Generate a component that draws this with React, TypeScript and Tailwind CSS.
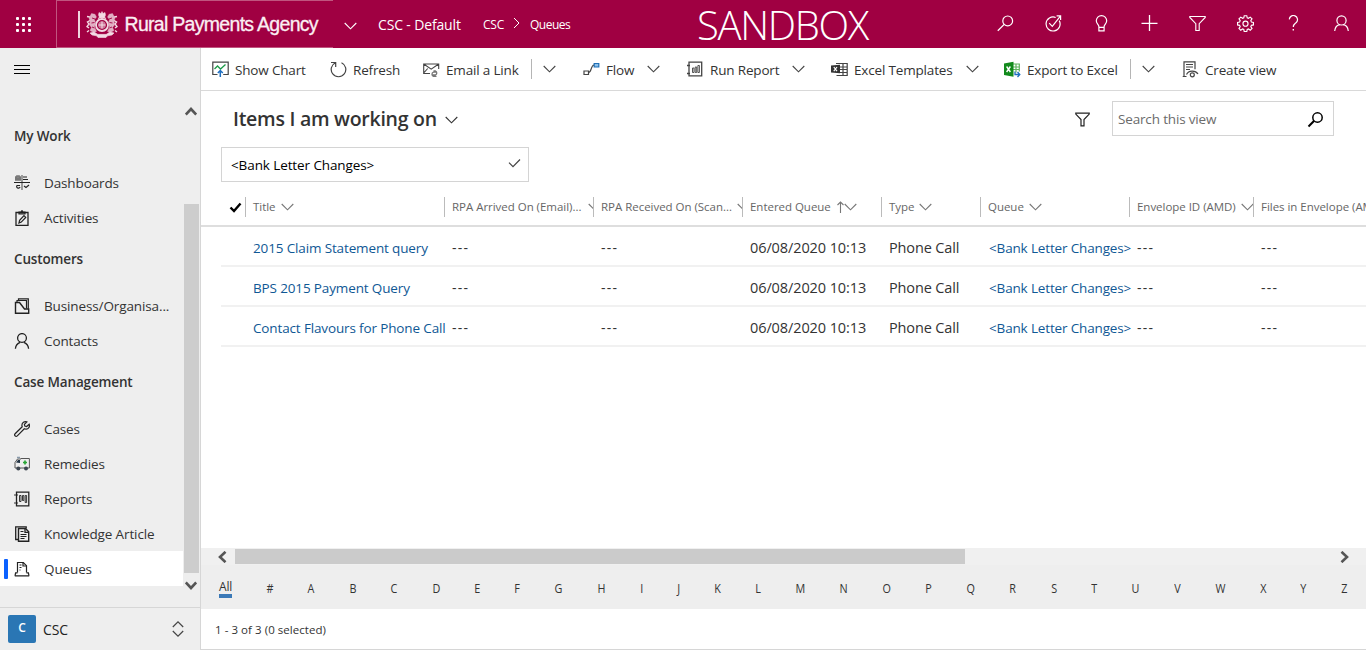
import type { ReactNode } from "react";

type IconProps = { className?: string; children: ReactNode; box?: string; w?: number; h?: number };

function Svg({ className = "", children, box, w = 16, h = 16 }: IconProps) {
  return (
    <svg
      width={w}
      height={h}
      viewBox={box ?? `0 0 ${w} ${h}`}
      fill="none"
      stroke="currentColor"
      strokeWidth="1"
      className={`shrink-0 ${className}`}
    >
      {children}
    </svg>
  );
}

function ChevronDown({ className = "" }: { className?: string }) {
  return (
    <Svg w={13} h={8} className={className}>
      <path d="M.7 1l5.8 5.8L12.3 1" strokeWidth="1.1" />
    </Svg>
  );
}

function Crest() {
  return (
    <Svg w={32} h={27} className="text-[#f3dbe4]">
      <path d="M12.500 4l.5-2.500 2 1L16 .5l1 2 2-1 .5 2.500-1 2.500h-5z" fill="currentColor" strokeWidth=".5" />
      <circle cx="16" cy="14" r="6" strokeWidth="1.800" />
      <circle cx="16" cy="14" r="3.800" fill="currentColor" stroke="none" opacity=".55" />
      <path d="M12 7.500Q16 5 20 7.500M12.500 14h7M16 10.500v7" strokeWidth="1.100" />
      <path d="M5.500 2.500l3.500.8 1.500 2.700-2 2.500 1 3-1 4.500 2 4.500-3 1-3.500-2 1.500-3-2-2.500.5-4-1-3z" fill="currentColor" opacity=".8" strokeWidth=".4" />
      <path d="M26.500 2.500L23 3.300 21.500 6l2 2.500-1 3 1 4.500-2 4.500 3 1 3.500-2-1.500-3 2-2.500-.5-4 1-3z" fill="currentColor" opacity=".8" strokeWidth=".4" />
      <path d="M3.800 6L1 5.500M4 9.500L1.500 11l1.500 2-2 2.500 2 1.500M3 19.500L1 21M28.200 6l2.800-.5M28 9.500l2.500 1.500-1.500 2 2 2.500-2 1.500M29 19.500l2 1.500" strokeWidth="1.400" />
      <path d="M6 7l3 1M5.500 12l3-.5M6 16l2.500 1M26 7l-3 1M26.500 12l-3-.5M26 16l-2.500 1" stroke="#a00042" strokeWidth=".9" />
      <path d="M4 22l4-1 3.500 2.200h9L24 21l4 1-2 2-4.500.8-1.500 1.700h-8L10.500 24.800 6 24z" fill="currentColor" strokeWidth=".6" />
      <path d="M12 22.300h8" stroke="#a00042" strokeWidth=".8" />
    </Svg>
  );
}

const topIcons: { name: string; icon: ReactNode }[] = [
  {
    name: "search",
    icon: (
      <Svg w={17} h={17}>
        <circle cx="10.700" cy="5.900" r="4.900" strokeWidth="1.200" />
        <path d="M7.200 9.400L.8 15.800" strokeWidth="1.300" />
      </Svg>
    ),
  },
  {
    name: "assistant",
    icon: (
      <Svg w={17} h={17}>
        <path d="M14.200 5.600A7 7 0 1 1 10.700 2.500M11.600.9h4v4M15.400 1.100L7.300 11.300 4.200 8.100" strokeWidth="1.200" />
      </Svg>
    ),
  },
  {
    name: "ideas",
    icon: (
      <Svg w={17} h={17}>
        <path d="M5.900 11.800c0-2.600-2.600-3-2.600-6A5.200 5.200 0 0 1 13.700 5.800c0 3-2.600 3.400-2.600 6v4H5.900zM5.900 12.300h5.200" strokeWidth="1.200" />
      </Svg>
    ),
  },
  {
    name: "add",
    icon: (
      <Svg w={17} h={17}>
        <path d="M8.500 0v16M.5 8.300h16" strokeWidth="1.300" />
      </Svg>
    ),
  },
  {
    name: "filter",
    icon: (
      <Svg w={17} h={17}>
        <path d="M.8 1.500h15.400v1L10.200 8.700v6.800H6.800V8.700L.8 2.500z" strokeWidth="1.100" />
      </Svg>
    ),
  },
  {
    name: "settings",
    icon: (
      <Svg w={17} h={17} box="0 0 24 24">
        <path
          d="M10.200 1.800h3.600l.6 2.900 1.800.8 2.500-1.700 2.500 2.500-1.700 2.500.8 1.800 2.900.6v3.600l-2.900.6-.8 1.800 1.700 2.500-2.500 2.500-2.500-1.700-1.800.8-.6 2.900h-3.600l-.6-2.900-1.800-.8-2.500 1.700-2.500-2.500 1.700-2.500-.8-1.800-2.900-.6v-3.600l2.900-.6.8-1.800-1.700-2.500 2.500-2.500 2.500 1.700 1.800-.8z"
          strokeWidth="1.600"
          transform="translate(0 -.8)"
        />
        <circle cx="12" cy="12.200" r="3.600" strokeWidth="1.600" />
      </Svg>
    ),
  },
  {
    name: "help",
    icon: (
      <Svg w={17} h={17}>
        <path d="M4.300 4.400a4.100 4.100 0 1 1 7 3.100C9.600 8.900 8.300 9.500 8.300 12" strokeWidth="1.200" />
        <path d="M8.300 14v1.600" strokeWidth="1.400" />
      </Svg>
    ),
  },
  {
    name: "account",
    icon: (
      <Svg w={17} h={17}>
        <circle cx="8.500" cy="5.400" r="4.600" strokeWidth="1.200" />
        <path d="M1.700 16c.4-3.600 2.500-5.900 5.200-6.300M15.300 16c-.4-3.600-2.500-5.900-5.200-6.300" strokeWidth="1.200" />
      </Svg>
    ),
  },
];

function TopBar() {
  return (
    <header className="flex h-12 shrink-0 items-center bg-[#a00042] text-white">
      <div className="flex h-full w-14 items-center pl-4">
        <div className="grid grid-cols-3 gap-[3px]">
          {Array.from({ length: 9 }, (_, i) => (
            <span key={i} className="size-[3px] rounded-[1px] bg-white" />
          ))}
        </div>
      </div>
      <div className="flex h-12 w-[277px] items-center border-y border-l border-[#c0557f] pl-[21px]">
        <span className="h-[27px] w-[1.500px] bg-[#f0d4de]" />
        <div className="ml-[6px] w-[33px]">
          <Crest />
        </div>
        <span className="ml-[6px] whitespace-nowrap pt-0.5 font-['Liberation_Sans'] text-[19.500px] tracking-[-0.700px] text-[#fbeff3] [-webkit-text-stroke:0.300px_#fbeff3]">
          Rural Payments Agency
        </span>
      </div>
      <ChevronDown className="ml-[11px] mt-1 w-[13px]" />
      <span className="ml-[21px] w-[105px] whitespace-nowrap pt-px text-[14px] tracking-[-0.15px]">CSC - Default</span>
      <span className="w-[30px] pt-px text-[12px] tracking-[-0.25px]">CSC</span>
      <Svg w={7} h={12} className="mb-0.5">
        <path d="M1 1l5 5-5 5" />
      </Svg>
      <span className="ml-[10px] w-[167px] pt-px text-[12px] tracking-[-0.5px]">Queues</span>
      <span className="w-[296px] whitespace-nowrap pt-px text-[40px] font-light leading-[55px] tracking-[-1.300px]">SANDBOX</span>
      <div className="flex flex-1 items-center gap-[31px] pl-[4px]">
        {topIcons.map((t) => (
          <span key={t.name} className="pb-0.5">
            {t.icon}
          </span>
        ))}
      </div>
    </header>
  );
}

const navIcon: Record<string, ReactNode> = {
  Dashboards: (
    <Svg>
      <path d="M1 2h2v-1h2v1h2M1 3.500h6M1 5h6" stroke="#777" strokeWidth="1.700" />
      <path d="M8 0v15" stroke="#777" strokeWidth="1.400" />
      <path d="M0 7.500h16M9 2h4M9 4.500h5" strokeWidth="1" />
      <path d="M6 10.500H3a1.700 1.700 0 1 0 3 1.500M10 11l2 1.500 3-2.500" strokeWidth="1.200" />
    </Svg>
  ),
  Activities: (
    <Svg>
      <path d="M2 2.500h12v13H2z" strokeWidth="1.300" />
      <path d="M5 3.800V2h2L8 .6 9 2h2v1.800z" strokeWidth="1.200" />
      <path d="M5 13l.6-2.600 4.400-4.700 1.700 1.700-4.400 4.700z" strokeWidth="1.200" />
    </Svg>
  ),
  "Business/Organisa...": (
    <Svg>
      <path d="M1.500 15.300V4.500h4l5 6.500h4.200v4.300z" strokeWidth="1.400" />
      <path d="M3 4V2.500h9.500v8M4.500 2.500V.8h9.800v10" strokeWidth="1.200" />
    </Svg>
  ),
  Contacts: (
    <Svg>
      <circle cx="8" cy="5" r="4.400" strokeWidth="1.300" />
      <path d="M1.400 15.700c.3-3.200 2.200-5.500 4.800-6.400M14.600 15.700c-.3-3.200-2.200-5.500-4.800-6.400" strokeWidth="1.300" />
    </Svg>
  ),
  Cases: (
    <Svg>
      <path
        d="M15.200 3.300l-2.600 2.200-1.800-.4-.4-1.700L12.800.9C10.500.1 7.800 1.600 7.900 4.300c0 .6.1 1 .3 1.500L1.100 12.700c-1.300 1.500.6 3.500 2.200 2.200l7-7.100c2.700 1.200 6-.9 4.900-4.500z"
        strokeWidth="1.200"
      />
    </Svg>
  ),
  Remedies: (
    <Svg>
      <path d="M1 12V6.500L3.500 3H7v-.5h8.400v9.500z" stroke="#555" strokeWidth="1" />
      <path d="M2 6.500l2-2.500h2v3z" fill="#234" stroke="none" />
      <path d="M3 1.500h3" stroke="#89a" strokeWidth="1.500" />
      <path d="M11 4.500v4M9 6.500h4" stroke="#2aa636" strokeWidth="1.700" />
      <circle cx="4.300" cy="12.500" r="2" fill="#3d4650" stroke="none" />
      <circle cx="12" cy="12.500" r="2" fill="#3d4650" stroke="none" />
    </Svg>
  ),
  Reports: (
    <Svg>
      <path d="M2.500 1.200h12.300v13.600H2.500z" strokeWidth="1.300" />
      <path d="M0 4h4M0 12h4M5.500 4.500h1.500v6H5.500zM8.500 4.500h1.300v5H8.500zM11.200 4.500h1.400v7h-1.400z" strokeWidth=".9" />
    </Svg>
  ),
  "Knowledge Article": (
    <Svg>
      <path d="M4.500 15.300V2.500h7l3.200 3.200v9.600z" strokeWidth="1.400" />
      <path d="M11 2.500v3.800h3.500M4 13.500H1.700V.8h10.500v1.700" strokeWidth="1.300" />
      <path d="M6.500 5.500h3M6.500 8.500h6M6.500 10.500h6M6.500 12.500h4" strokeWidth="1" />
    </Svg>
  ),
  Queues: (
    <Svg>
      <path d="M3.500 11.500v-10h5.800l3.200 3.200v6.800" strokeWidth="1.200" />
      <path d="M9 1.500v3.500h3.500M1 14.800l.6-3h1.900M12.500 11.800h1.900l.6 3M.8 14.800h14.400M5.500 4h2M5.500 6.500h2M5.500 9h1" strokeWidth="1.200" />
    </Svg>
  ),
};

const groups = [
  { title: "My Work", items: ["Dashboards", "Activities"] },
  { title: "Customers", items: ["Business/Organisa...", "Contacts"] },
  { title: "Case Management", items: ["Cases", "Remedies", "Reports", "Knowledge Article", "Queues"] },
];

function Sidebar() {
  return (
    <aside className="flex w-[201px] shrink-0 flex-col border-r border-[#d6d6d6] bg-[#eeeeee]">
      <div className="flex h-[559px]">
        <div className="flex w-[183px] flex-col">
          <div className="flex h-16 flex-col gap-[3px] pl-[14px] pt-[17px]">
            <span className="h-px w-4 bg-black" />
            <span className="h-px w-4 bg-black" />
            <span className="h-px w-4 bg-black" />
          </div>
          {groups.map((g) => (
            <section key={g.title}>
              <h2 className="h-[53px] pl-[14px] text-[13.500px] font-semibold leading-[48px] tracking-[-0.15px] text-[#333]">
                {g.title}
              </h2>
              <ul>
                {g.items.map((it) => (
                  <li
                    key={it}
                    className={
                      it === "Queues"
                        ? "flex h-[35px] items-center bg-white"
                        : "flex h-[35px] items-center"
                    }
                  >
                    <span
                      className={
                        it === "Queues"
                          ? "ml-1 mr-0.5 h-5 w-1 rounded-[1px] bg-[#0b61ff]"
                          : "ml-1 mr-0.5 h-5 w-1"
                      }
                    />
                    <span className="ml-1 w-[30px] text-[#222]">{navIcon[it]}</span>
                    <span className="whitespace-nowrap pt-px text-[13.500px] tracking-[-0.12px] text-[#333]">{it}</span>
                  </li>
                ))}
              </ul>
            </section>
          ))}
        </div>
        <div className="flex w-[17px] flex-col items-center pt-[58px] text-[#555]">
          <Svg w={12} h={10} className="mr-px">
            <path d="M.8 8.500L6 3l5.200 5.500" strokeWidth="2.600" />
          </Svg>
          <div className="mt-[88px] h-[369px] w-[15px] bg-[#cdcdcd]" />
          <Svg w={12} h={10} className="mr-px mt-[7px]">
            <path d="M.8 2.500L6 8l5.200-5.500" strokeWidth="2.600" />
          </Svg>
        </div>
      </div>
      <div className="flex flex-1 items-center border-t border-[#d6d6d6] pl-2 pr-[16px]">
        <span className="flex size-7 items-center justify-center rounded-[2px] bg-[#2a76b4] pb-0.5 text-[12px] font-semibold text-white">
          C
        </span>
        <span className="ml-[7px] flex-1 pt-px text-[14px] font-medium tracking-[-0.1px] text-[#222]">CSC</span>
        <Svg w={12} h={18} className="text-[#444]">
          <path d="M.8 7L6 1.800 11.200 7M.8 11L6 16.200 11.200 11" strokeWidth="1.200" />
        </Svg>
      </div>
    </aside>
  );
}

function Command({ width, icon, label, menu, split }: { width: string; icon: ReactNode; label: string; menu?: boolean; split?: boolean }) {
  return (
    <div className={`flex h-full shrink-0 items-center text-[#444] ${width}`}>
      <span className="flex w-[23px] shrink-0 items-center">{icon}</span>
      <span className="whitespace-nowrap pt-[2px] text-[13.500px] tracking-[-0.17px] text-[#333]">{label}</span>
      {split && <span className="ml-3 h-5 w-px bg-[#b5b5b5]" />}
      {menu && <ChevronDown className={split ? "ml-[11px] w-[13px]" : "ml-[13px]"} />}
    </div>
  );
}

function CommandBar() {
  return (
    <nav className="flex h-[43px] shrink-0 items-center border-b border-[#d9d9d9] pl-[11px]">
      <Command
        width="w-[118px]"
        label="Show Chart"
        icon={
          <Svg w={17} h={17} className="mt-px">
            <path d="M5.500 13.500H.8V1.200h15.400v12.300h-5" strokeWidth="1.200" />
            <path d="M2.500 8l3-3 3 3L13.500 3.500" stroke="#1d9b49" strokeWidth="1.300" />
            <path d="M8.300 16V9.500M5.800 12l2.500-2.500 2.500 2.500" stroke="#1f6fc0" strokeWidth="1.500" />
          </Svg>
        }
      />
      <Command
        width="w-[93px]"
        label="Refresh"
        icon={
          <Svg w={17} h={17}>
            <path d="M5.500 1.800A7.300 7.300 0 1 0 11.500 1.800M1 1.500h4.700v4.600" strokeWidth="1.200" />
          </Svg>
        }
      />
      <Command
        width="w-[160px]"
        label="Email a Link"
        menu
        split
        icon={
          <Svg w={17} h={17}>
            <path d="M7 12.500H.7V3h15v5M.7 3l7.500 5.200L15.700 3M.7 12l4-4.500" strokeWidth="1.100" />
            <path d="M10.500 10h2a2.200 2.200 0 0 1 0 4h-3M13.500 11.200h-3a2.200 2.200 0 0 0 0 4.200h3" stroke="#777" strokeWidth="1.300" />
          </Svg>
        }
      />
      <Command
        width="w-[104px]"
        label="Flow"
        menu
        icon={
          <Svg w={17} h={17}>
            <path d="M1 10h4.500v3.500H1z" strokeWidth="1.200" />
            <path d="M5.500 11.500C9 11 7.500 4.500 11 4" strokeWidth="1.100" />
            <path d="M11.200 2.500h4.600v3.500h-4.600z" fill="#8cc0ea" stroke="#1f6fb5" strokeWidth="1.200" />
          </Svg>
        }
      />
      <Command
        width="w-[144px]"
        label="Run Report"
        menu
        icon={
          <Svg w={17} h={17}>
            <path d="M2 1.200h12.700v13.600H2zM0 4.500h3M0 12.500h3" strokeWidth="1.300" />
            <path d="M5.500 7h1.500v4.500H5.500zM8.200 6h1.500v5.500H8.200zM10.900 4.500h1.500v7h-1.500z" strokeWidth=".9" />
          </Svg>
        }
      />
      <Command
        width="w-[173px]"
        label="Excel Templates"
        menu
        icon={
          <Svg w={17} h={17}>
            <path d="M8 2.500h8.200v12H5.500M9 6h7M9 8.500h7M9 11.500h7M12 2.500v12M5 2.500h3" strokeWidth="1.200" />
            <path d="M0 4.500l9-.8v8.600l-9-.8z" fill="#333" stroke="none" />
            <path d="M2.800 6l3.200 4.200M6 6l-3.200 4.200" stroke="#fff" strokeWidth="1.200" />
          </Svg>
        }
      />
      <Command
        width="w-[178px]"
        label="Export to Excel"
        menu
        split
        icon={
          <Svg w={17} h={17}>
            <path d="M9 3h6.300v7.500M9 6h6M9 8.500h6M12 3v8.500" stroke="#5fb35f" strokeWidth="1.200" />
            <path d="M0 2.500L9.500.8v15L0 14z" fill="#128a1c" stroke="none" />
            <path d="M2.600 5.500l3.800 5.500M6.400 5.500L2.600 11" stroke="#fff" strokeWidth="1.400" />
            <path d="M11 10.500v3h4.500M13.500 11l2.300 2.500-2.300 2.500" stroke="#1f6fc0" strokeWidth="1.300" />
          </Svg>
        }
      />
      <Command
        width="w-[110px]"
        label="Create view"
        icon={
          <Svg w={17} h={17}>
            <path d="M4.500 15.500H.7M2 15.500V.8h11v7.500M4 3.500h7M4 6h7M4 8.500h4" strokeWidth="1.200" />
            <path d="M4.500 13.500c2-4.500 9-4.500 11.500-.5" strokeWidth="1.200" />
            <circle cx="10.300" cy="13.800" r="2" strokeWidth="1.200" />
          </Svg>
        }
      />
    </nav>
  );
}

type Column = { label: string; width: string; gap: string; sorted?: boolean; key: string };

const columns: Column[] = [
  { key: "title", label: "Title", width: "w-[199px]", gap: "gap-[5px]" },
  { key: "arrived", label: "RPA Arrived On (Email)...", width: "w-[149px]", gap: "gap-[7px]" },
  { key: "received", label: "RPA Received On (Scan...", width: "w-[149px]", gap: "gap-[5px]" },
  { key: "entered", label: "Entered Queue", width: "w-[139px]", gap: "gap-[6px]", sorted: true },
  { key: "type", label: "Type", width: "w-[99px]", gap: "gap-[5px]" },
  { key: "queue", label: "Queue", width: "w-[149px]", gap: "gap-[5px]" },
  { key: "envelope", label: "Envelope ID (AMD)", width: "w-[124px]", gap: "gap-[5px]" },
  { key: "files", label: "Files in Envelope (AMD)", width: "w-[113px]", gap: "gap-[5px]" },
];

const titles = ["2015 Claim Statement query", "BPS 2015 Payment Query", "Contact Flavours for Phone Call"];

function Dashes({ width }: { width: string }) {
  return <span className={`shrink-0 pl-2 text-[14px] tracking-[1.300px] text-[#333] ${width}`}>---</span>;
}

function Grid() {
  return (
    <div className="flex flex-1 flex-col overflow-hidden">
      <div className="flex h-[45px] shrink-0 items-center border-b-2 border-[#dedede] pl-[28px]">
        <Svg w={13} h={11} className="mr-[3px] mt-[8px] text-black">
          <path d="M1.500 5.500L5 9l6.500-7.500" strokeWidth="2.400" />
        </Svg>
        {columns.map((c) => (
          <div key={c.key} className={`mt-[7px] flex h-5 shrink-0 items-center overflow-hidden border-l border-[#bbb] pl-[7px] ${c.width} ${c.gap}`}>
            <span className="whitespace-nowrap text-[11.500px] tracking-[-0.03px] text-[#666]">{c.label}</span>
            <span className="flex shrink-0 items-center text-[#777]">
              {c.sorted && (
                <Svg w={7} h={12}>
                  <path d="M3.500 12V1M.5 4l3-3 3 3" strokeWidth="1.100" />
                </Svg>
              )}
              <ChevronDown />
            </span>
          </div>
        ))}
      </div>
      {titles.map((t) => (
        <div key={t} className="ml-5 flex h-10 shrink-0 items-center border-b-2 border-[#f1f1f1] pl-6 pt-[3px]">
          <span className="w-[199px] shrink-0 whitespace-nowrap pl-2 pt-px text-[13.500px] tracking-[-0.14px] text-[#0f5895]">{t}</span>
          <Dashes width="w-[149px]" />
          <Dashes width="w-[149px]" />
          <span className="w-[139px] shrink-0 pl-2 text-[14.500px] tracking-[-0.1px] text-[#333]">06/08/2020 10:13</span>
          <span className="w-[99px] shrink-0 pl-2 text-[14.500px] tracking-[-0.15px] text-[#333]">Phone Call</span>
          <span className="w-[149px] shrink-0 whitespace-nowrap pl-[9px] pt-px text-[13.500px] tracking-[-0.15px] text-[#0f5895]">
            {"<Bank Letter Changes>"}
          </span>
          <Dashes width="w-[124px]" />
          <Dashes width="w-[100px]" />
        </div>
      ))}
    </div>
  );
}

const letters = ["#", ..."ABCDEFGHIJKLMNOPQRSTUVWXYZ".split("")];

function Main() {
  return (
    <main className="flex min-w-0 flex-1 flex-col overflow-hidden border-b border-[#d6d6d6] bg-white">
      <CommandBar />
      <div className="flex h-14 shrink-0 items-center pl-8 pr-8">
        <h1 className="whitespace-nowrap text-[19.500px] font-semibold tracking-[-0.270px] text-[#333]">Items I am working on</h1>
        <ChevronDown className="ml-2 mt-0.5 text-[#333]" />
        <Svg w={15} h={15} className="ml-auto text-[#222]">
          <path d="M.8 1.200h13.400v.9L9 7.600v6.200H6V7.600L.8 2.100z" strokeWidth="1.200" />
        </Svg>
        <div className="mb-px ml-[22px] flex h-[35px] w-[222px] items-center border border-[#d4d4d4] pl-[5px] pr-[9px]">
          <span className="flex-1 pt-px text-[13.500px] tracking-[-0.16px] text-[#6b6b6b]">Search this view</span>
          <Svg w={17} h={17} className="mt-px text-black">
            <circle cx="10.500" cy="6.500" r="4.700" strokeWidth="1.500" />
            <path d="M7.200 9.800L1.500 15.500" strokeWidth="2" />
          </Svg>
        </div>
      </div>
      <div className="ml-5 flex h-[35px] w-[308px] shrink-0 items-center border border-[#d4d4d4] pl-[9px] pr-[7px]">
        <span className="flex-1 pt-px text-[13.500px] tracking-[-0.1px] text-black">{"<Bank Letter Changes>"}</span>
        <Svg w={13} h={10} className="mb-[3px] text-[#444]">
          <path d="M1 4.700l4 4L12 1.500" strokeWidth="1.200" />
        </Svg>
      </div>
      <Grid />
      <div className="flex h-[17px] shrink-0 items-center bg-[#f0f0f0] pl-[15px] text-[#555]">
        <Svg w={12} h={12}>
          <path d="M9.500.8L4 6l5.500 5.200" strokeWidth="2.600" />
        </Svg>
        <div className="ml-[7px] h-[15px] w-[730px] bg-[#cbcbcb]" />
        <Svg w={12} h={12} className="ml-auto mr-[15px]">
          <path d="M2.500.8L8 6l-5.500 5.200" strokeWidth="2.600" />
        </Svg>
      </div>
      <div className="flex h-[44px] shrink-0 items-center justify-between bg-[#eeeeee] pl-[18px] pr-[18px] pt-[4px] text-[12px] text-[#333]">
        <span className="mb-px border-b-4 border-[#3b79b7] leading-[15px] tracking-[-0.2px]">All</span>
        {letters.map((l) => (
          <span key={l} className="scale-x-90">
            {l}
          </span>
        ))}
      </div>
      <div className="flex h-10 shrink-0 items-center pl-[14px] pt-0.5 text-[11.500px] tracking-[0.050px] text-[#333]">
        1 - 3 of 3 (0 selected)
      </div>
    </main>
  );
}

export default function App() {
  return (
    <div className="flex h-[650px] w-[1366px] flex-col overflow-hidden bg-white font-['Open_Sans','Noto_Sans',sans-serif]">
      <TopBar />
      <div className="flex min-h-0 flex-1">
        <Sidebar />
        <Main />
      </div>
    </div>
  );
}
